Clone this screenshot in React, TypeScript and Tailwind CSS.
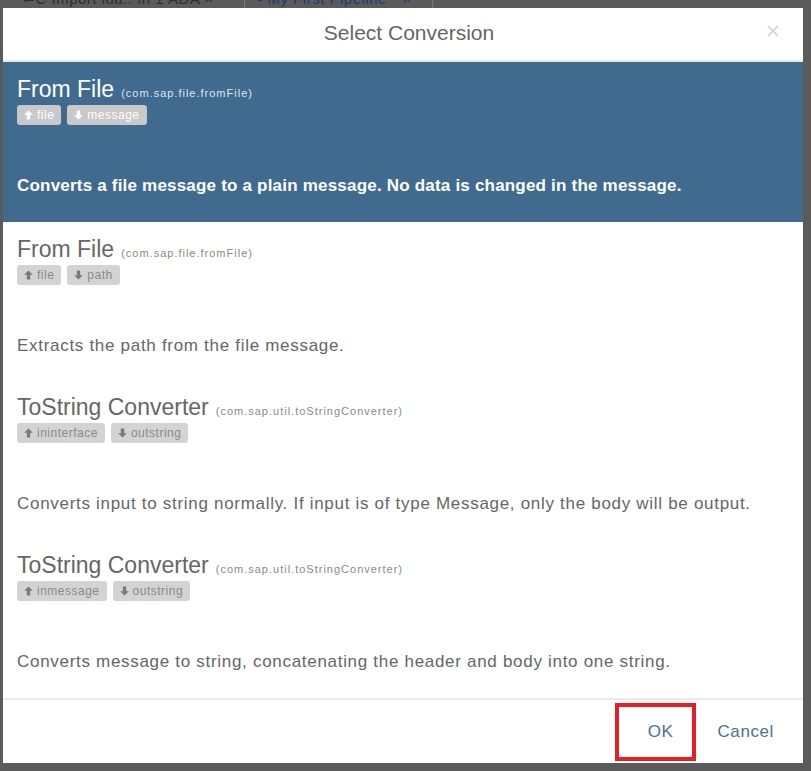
type Port = { dir: 'in' | 'out'; name: string };

type Conversion = {
  title: string;
  id: string;
  ports: Port[];
  description: string;
};

const conversions: Conversion[] = [
  {
    title: 'From File',
    id: '(com.sap.file.fromFile)',
    ports: [
      { dir: 'in', name: 'file' },
      { dir: 'out', name: 'message' },
    ],
    description: 'Converts a file message to a plain message. No data is changed in the message.',
  },
  {
    title: 'From File',
    id: '(com.sap.file.fromFile)',
    ports: [
      { dir: 'in', name: 'file' },
      { dir: 'out', name: 'path' },
    ],
    description: 'Extracts the path from the file message.',
  },
  {
    title: 'ToString Converter',
    id: '(com.sap.util.toStringConverter)',
    ports: [
      { dir: 'in', name: 'ininterface' },
      { dir: 'out', name: 'outstring' },
    ],
    description:
      'Converts input to string normally. If input is of type Message, only the body will be output.',
  },
  {
    title: 'ToString Converter',
    id: '(com.sap.util.toStringConverter)',
    ports: [
      { dir: 'in', name: 'inmessage' },
      { dir: 'out', name: 'outstring' },
    ],
    description: 'Converts message to string, concatenating the header and body into one string.',
  },
];

const Arrow = ({ up }: { up: boolean }) => (
  <svg width="9" height="10" viewBox="0 0 9 10" className={up ? '' : 'rotate-180'}>
    <path d="M4.5 0.5 L8.8 4.8 L6.2 4.8 L6.2 9.5 L2.8 9.5 L2.8 4.8 L0.2 4.8 Z" fill="currentColor" />
  </svg>
);

const Item = ({ c, selected }: { c: Conversion; selected: boolean }) => {
  return (
    <div
      className={
        selected
          ? 'bg-[#406b8f] text-white px-[14px] pt-[14px] pb-[25px]'
          : 'bg-white text-[#666666] px-[14px] pt-[14px] pb-[23px]'
      }
    >
      <div className="flex items-baseline h-[26px]">
        <span className="text-[23px] leading-[26px]">{c.title}</span>
        <span
          className={
            selected
              ? 'ml-[7px] text-[11px] tracking-[1px] text-[#dce6ef]'
              : 'ml-[7px] text-[11px] tracking-[1px] text-[#8a8a8a]'
          }
        >
          {c.id}
        </span>
      </div>
      <div className="flex gap-[6px] mt-[3px] h-[20px]">
        {c.ports.map((p) => (
          <div
            key={p.dir + p.name}
            className={
              selected
                ? 'flex items-center gap-[4px] rounded-[3px] bg-[#c9c9c9] text-white px-[7px] text-[12px] tracking-[0.5px]'
                : 'flex items-center gap-[4px] rounded-[3px] bg-[#d3d3d3] text-[#8a8a8a] px-[7px] text-[12px] tracking-[0.5px]'
            }
          >
            <span className={selected ? 'text-white' : 'text-[#7a7a7a]'}>
              <Arrow up={p.dir === 'in'} />
            </span>
            <span>{p.name}</span>
          </div>
        ))}
      </div>
      <div
        className={
          selected
            ? 'mt-[50px] text-[17px] leading-[22px] font-bold tracking-[0.2px]'
            : 'mt-[50px] text-[17px] leading-[22px] tracking-[0.7px]'
        }
      >
        {c.description}
      </div>
    </div>
  );
};

export default function App() {
  return (
    <div
      className="w-[811px] h-[771px] bg-[#5b5b5b] overflow-hidden flex flex-col"
      style={{ fontFamily: '"Liberation Sans", Arial, sans-serif' }}
    >
      <div className="h-[8px] overflow-hidden flex text-[#2f2f2f] text-[15px] leading-[16px]">
        <div className="-mt-[9px] pl-[22px] w-[245px] border-r border-[#777] tracking-[0.5px]">
          ⇐C Import lua.. fn 1 ADA ×
        </div>
        <div className="-mt-[9px] pl-[12px] pr-[20px] border-r border-[#777] text-[#1c3c6e] tracking-[0.5px]">
          ▪ My First Pipeline * ×
        </div>
      </div>
      <div className="ml-[3px] w-[800px] h-[755px] bg-white flex flex-col">
        <div className="relative h-[54px] border-b-2 border-[#e8e8e8] flex items-center justify-center pl-[12px]">
          <span className="text-[21px] text-[#666666] -mt-[2px]">Select Conversion</span>
          <svg className="absolute right-[24px] top-[17px]" width="12" height="12" viewBox="0 0 12 12">
            <path d="M1 1 L11 11 M11 1 L1 11" stroke="#d0d0d0" strokeWidth="1.6" />
          </svg>
        </div>
        <div className="flex-1 flex flex-col">
          {conversions.map((c, i) => (
            <Item key={i} c={c} selected={i === 0} />
          ))}
        </div>
        <div className="h-[65px] border-t-2 border-[#ebebeb] flex items-center justify-end pr-[29px]">
          <div className="w-[81px] h-[58px] border-[4px] border-[#e81d25] flex items-center justify-center mt-[1px]">
            <span className="text-[17px] text-[#4b7195] pl-[9px] tracking-[0.5px]">OK</span>
          </div>
          <span className="ml-[21px] text-[17px] text-[#4b7195] tracking-[0.6px]">Cancel</span>
        </div>
      </div>
    </div>
  );
}
